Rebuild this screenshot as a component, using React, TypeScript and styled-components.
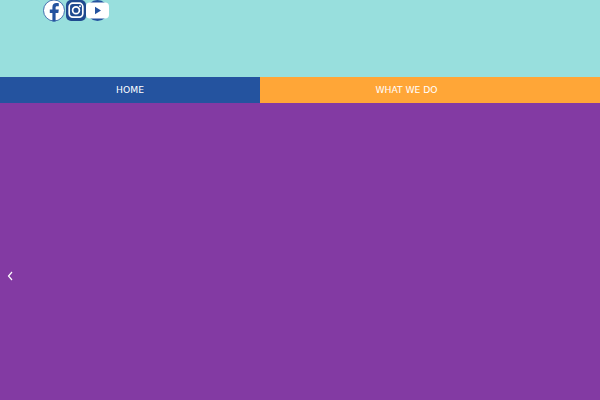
import React, { FC } from "react";
import styled, { createGlobalStyle } from "styled-components";

const GlobalStyle = createGlobalStyle`
  html, body {
    margin: 0;
    padding: 0;
    background: #833aa3;
  }
  body {
    font-family: "DejaVu Sans", Verdana, sans-serif;
  }
`;

const Page = styled.div`
  width: 600px;
  height: 400px;
  overflow: hidden;
  display: flex;
  flex-direction: column;
  background: #833aa3;
`;

const Header = styled.header`
  height: 77px;
  background: #98dfdd;
  padding-left: 43px;
  box-sizing: border-box;
`;

const SocialRow = styled.div`
  display: flex;
`;

const SocialLink = styled.a`
  display: block;
  height: 22px;
`;

const SocialIcon = styled.svg`
  display: block;
  height: 22px;
`;

const Nav = styled.nav`
  display: flex;
  height: 26px;
`;

const NavItem = styled.a<{ $bg: string; $width: number; $pad?: number }>`
  display: flex;
  align-items: center;
  justify-content: center;
  box-sizing: border-box;
  width: ${(props) => props.$width}px;
  padding-right: ${(props) => props.$pad || 0}px;
  padding-bottom: 2px;
  background: ${(props) => props.$bg};
  color: #fff;
  font-size: 9.2px;
`;

const Slider = styled.main`
  flex: 1;
  display: flex;
  align-items: center;
  padding-left: 6px;
  padding-top: 48px;
`;

const ArrowIcon = styled.svg`
  width: 8px;
  height: 12px;
  display: block;
`;

const Facebook: FC = () => (
  <SocialIcon width="23" viewBox="0 0 23 22">
    <circle cx="11" cy="10.5" r="10.5" fill="#fff" stroke="#24539f" strokeWidth="0.8" />
    <path d="M9.4 21.5V13H6.8V9.6H9.4V7.2C9.4 4.4 11 3 13.4 3C14.5 3 15.4 3.1 15.8 3.2V6.2H14.2C12.8 6.2 12.6 6.9 12.6 7.8V9.6H15.8L15.3 13H12.6V21.5Z" fill="#24539f" />
  </SocialIcon>
);

const Instagram: FC = () => (
  <SocialIcon width="20" viewBox="0 0 20 22">
    <rect x="0" y="0" width="20" height="21" rx="5" fill="#1f4a8f" />
    <rect x="3.2" y="3.2" width="13.6" height="14" rx="3.6" fill="none" stroke="#fff" strokeWidth="1.7" />
    <circle cx="10" cy="10.3" r="3.4" fill="none" stroke="#fff" strokeWidth="1.7" />
    <circle cx="14" cy="6.2" r="1" fill="#fff" />
  </SocialIcon>
);

const Youtube: FC = () => (
  <SocialIcon width="23" viewBox="0 0 23 22">
    <circle cx="11.5" cy="10.5" r="10.5" fill="#24539f" />
    <rect x="0" y="2.5" width="23" height="16" rx="4" fill="#fff" />
    <path d="M9 6.8L15 10.5L9 14.2Z" fill="#24539f" />
  </SocialIcon>
);

const App: FC = () => {
  return (
    <>
      <GlobalStyle />
      <Page>
        <Header>
          <SocialRow>
            <SocialLink>
              <Facebook />
            </SocialLink>
            <SocialLink>
              <Instagram />
            </SocialLink>
            <SocialLink>
              <Youtube />
            </SocialLink>
          </SocialRow>
        </Header>
        <Nav>
          <NavItem $bg="#24539f" $width={260}>HOME</NavItem>
          <NavItem $bg="#ffa637" $width={340} $pad={47}>WHAT WE DO</NavItem>
        </Nav>
        <Slider>
          <ArrowIcon viewBox="0 0 8 12">
            <path d="M6 2L2.5 6L6 10" fill="none" stroke="#fff" strokeWidth="1.2" />
          </ArrowIcon>
        </Slider>
      </Page>
    </>
  );
};

export default App;
